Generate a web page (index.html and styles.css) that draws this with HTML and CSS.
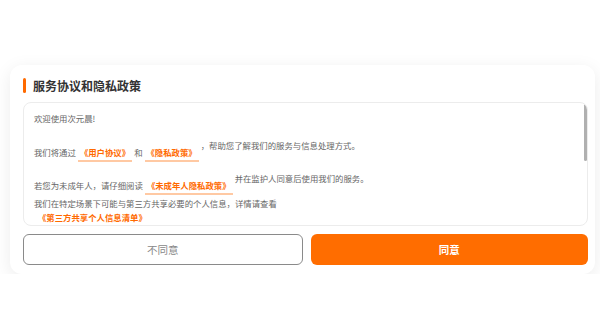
FILE: index.html
```html
<!DOCTYPE html>
<html lang="zh-CN">
<head>
  <meta charset="UTF-8">
  <meta name="viewport" content="width=device-width, initial-scale=1.0">
  <title>服务协议和隐私政策</title>
  <link rel="stylesheet" href="styles.css">
</head>
<body>
  <div class="dialog">
    <div class="dialog-title">服务协议和隐私政策</div>

    <div class="agreement">
      <div class="agreement-body">
        <p class="welcome">欢迎使用次元晨!</p>
        <p class="para">我们将通过<a class="doc-link">《用户协议》</a>和<a class="doc-link">《隐私政策》</a><span class="tail">，帮助您了解我们的服务与信息处理方式。</span></p>
        <p class="para para-last">若您为未成年人，请仔细阅读<a class="doc-link">《未成年人隐私政策》</a><span class="tail">并在监护人同意后使用我们的服务。</span></p>
        <p class="plain">我们在特定场景下可能与第三方共享必要的个人信息，详情请查看<br><a class="doc-link">《第三方共享个人信息清单》</a></p>
        <p class="plain">为保障您的账号与使用安全，我们会在必要时申请设备信息、存储、相机等权限，您可以在系统设置中随时关闭。</p>
        <p class="plain">点击“同意”即表示您已阅读并同意上述协议的全部内容。</p>
      </div>
      <div class="scroll-thumb"></div>
    </div>

    <div class="actions">
      <button class="btn btn-cancel">不同意</button>
      <button class="btn btn-ok">同意</button>
    </div>
  </div>
</body>
</html>
```

FILE: styles.css
```css
body {
  margin: 0;
  background-color: #fff;
  font-family: "Noto Sans CJK SC", "Noto Sans", sans-serif;
  color: #333;
}

.dialog {
  margin: 65px 5px 0 10px;
  padding: 13px 7px 9px 13px;
  background-color: #fff;
  border-radius: 12px;
  box-shadow: 0 4px 18px rgba(0,0,0,0.08);
}

.dialog-title {
  display: flex;
  align-items: center;
  height: 15px;
  font-size: 12px;
  font-weight: bold;
  color: #333;
}

.dialog-title::before {
  content: "";
  width: 3px;
  height: 15px;
  margin-right: 7px;
  border-radius: 2px;
  background-color: #ff6a00;
}

.agreement {
  position: relative;
  margin-top: 9px;
  height: 122px;
  border: 1px solid #ececec;
  border-radius: 8px;
  overflow: hidden;
}

.agreement-body {
  padding: 8px 11px 0 10px;
  font-size: 8.4px;
  line-height: 14px;
  color: #666;
}

/* scroll indicator, the list is longer than the box */
.scroll-thumb {
  position: absolute;
  top: 1px;
  right: 0;
  width: 3px;
  height: 57px;
  border-radius: 2px;
  background-color: #b0b0b0;
}

.agreement p {
  margin: 0;
}

.welcome {
  margin-bottom: 13px !important;
}

.para {
  margin-bottom: 9px !important;
}

.para-last {
  margin-bottom: 1px !important;
}

.plain + .plain {
  margin-top: 6px !important;
}

.doc-link {
  display: inline-block;
  padding: 0 2px 1px;
  margin: 0 2px;
  line-height: 14px;
  border-bottom: 2px solid #ffc9a3;
  color: #ff6a00;
  font-weight: bold;
}

.tail {
  vertical-align: 7px;
}

.actions {
  display: flex;
  gap: 8px;
  margin-top: 8px;
}

.btn {
  flex: 1;
  height: 31px;
  border-radius: 6px;
  font-family: inherit;
  font-size: 10.5px;
  cursor: pointer;
}

.btn-cancel {
  background-color: #fff;
  border: 1px solid #8a8a8a;
  color: #888;
}

.btn-ok {
  background-color: #ff6d00;
  border: none;
  color: #fff;
  font-weight: bold;
}
```
